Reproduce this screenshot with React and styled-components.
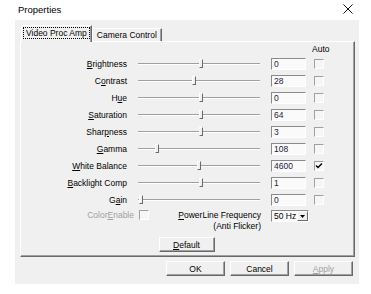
import styled, { createGlobalStyle } from 'styled-components';

const GlobalStyle = createGlobalStyle`
  html, body {
    margin: 0;
    padding: 0;
    background: #ffffff;
  }
  body {
    font-family: "Liberation Sans", Arial, sans-serif;
    font-size: 8.5px;
    color: #000;
  }
`;

const controls = [
  { label: 'Brightness', key: 0, value: '0', pos: 61 },
  { label: 'Contrast', key: 1, value: '28', pos: 54 },
  { label: 'Hue', key: 1, value: '0', pos: 61 },
  { label: 'Saturation', key: 0, value: '64', pos: 61 },
  { label: 'Sharpness', key: 4, value: '3', pos: 61 },
  { label: 'Gamma', key: 0, value: '108', pos: 17 },
  { label: 'White Balance', key: 0, value: '4600', pos: 59, auto: true },
  { label: 'Backlight Comp', key: 0, value: '1', pos: 61 },
  { label: 'Gain', key: 1, value: '0', pos: 1 },
];

function Accel({ text, at }) {
  return (
    <>
      {text.slice(0, at)}
      <u>{text[at]}</u>
      {text.slice(at + 1)}
    </>
  );
}

function App() {
  return (
    <Window>
      <GlobalStyle />
      <TitleBar>
        <Title>Properties</Title>
        <Close viewBox="0 0 10 10">
          <path d="M0.5 0.5 L9.5 9.5 M9.5 0.5 L0.5 9.5" stroke="#111" strokeWidth="1" />
        </Close>
      </TitleBar>

      <Body>
        <TabBar>
          <Tab $active>
            <Focus>Video Proc Amp</Focus>
          </Tab>
          <Tab>Camera Control</Tab>
        </TabBar>

        <Panel>
          <HeaderRow>
            <AutoLabel>Auto</AutoLabel>
          </HeaderRow>

          {controls.map((c) => (
            <Row key={c.label}>
              <Label>
                <Accel text={c.label} at={c.key} />
              </Label>
              <Track>
                <Thumb style={{ left: c.pos }} />
              </Track>
              <ValueBox>{c.value}</ValueBox>
              <Check $checked={c.auto}>
                {c.auto && (
                  <svg width="8" height="8" viewBox="0 0 8 8">
                    <path d="M1 3.5 L3 5.5 L7 1.5" stroke="#000" strokeWidth="1.4" fill="none" />
                  </svg>
                )}
              </Check>
            </Row>
          ))}

          <ExtraRow>
            <ColorLabel>
              Color<u>E</u>nable
            </ColorLabel>
            <Check $disabled />
            <PowerLabel>
              <span>
                <u>P</u>owerLine Frequency
              </span>
              <span>(Anti Flicker)</span>
            </PowerLabel>
            <Select>
              <SelectText>50 Hz</SelectText>
              <SelectArrow>
                <svg width="5" height="3" viewBox="0 0 5 3">
                  <path d="M0 0 H5 L2.5 3 Z" fill="#000" />
                </svg>
              </SelectArrow>
            </Select>
          </ExtraRow>

          <DefaultRow>
            <Button $w={56}>
              <u>D</u>efault
            </Button>
          </DefaultRow>
        </Panel>

        <ButtonRow>
          <Button>OK</Button>
          <Button>Cancel</Button>
          <Button $disabled>
            <u>A</u>pply
          </Button>
        </ButtonRow>
      </Body>
    </Window>
  );
}

export default App;

const Window = styled.div`
  width: 371px;
  height: 294px;
  background: #ffffff;
  overflow: hidden;
`;

const TitleBar = styled.div`
  height: 20px;
  display: flex;
  align-items: center;
  justify-content: space-between;
  padding: 0 18px 0 18px;
  box-sizing: border-box;
`;

const Title = styled.span`
  font-size: 9.5px;
  color: #000;
  margin-top: -1px;
`;

const Close = styled.svg`
  width: 10px;
  height: 10px;
  margin-top: -3px;
`;

const Body = styled.div`
  margin-left: 15px;
  width: 344px;
  height: 264px;
  box-sizing: border-box;
  background: #f0f0f0;
  padding: 5px 4px 0 5px;
  display: flex;
  flex-direction: column;
`;

const TabBar = styled.div`
  display: flex;
  align-items: flex-end;
  height: 16px;
  padding-left: 1px;
  position: relative;
  z-index: 1;
`;

const Tab = styled.div`
  box-sizing: border-box;
  height: ${(p) => (p.$active ? '17px' : '13px')};
  margin-bottom: ${(p) => (p.$active ? '-1px' : '0')};
  padding: ${(p) => (p.$active ? '1px 1px 0 1px' : '0 4px')};
  display: flex;
  align-items: ${(p) => (p.$active ? 'flex-start' : 'center')};
  background: #f0f0f0;
  border-top: 1px solid #ffffff;
  border-left: 1px solid #ffffff;
  border-right: 1px solid #696969;
  box-shadow: inset -1px 0 #a0a0a0;
  white-space: nowrap;
`;

const Focus = styled.span`
  display: block;
  padding: 0 2px;
  height: 12px;
  line-height: 11px;
  border: 1px dotted #000;
  box-sizing: border-box;
`;

const Panel = styled.div`
  width: 335px;
  height: 216px;
  box-sizing: border-box;
  border-top: 1px solid #ffffff;
  border-left: 1px solid #ffffff;
  border-right: 1px solid #696969;
  border-bottom: 1px solid #696969;
  box-shadow: inset -1px -1px #a0a0a0;
  display: flex;
  flex-direction: column;
`;

const HeaderRow = styled.div`
  height: 13px;
  display: flex;
  align-items: center;
  padding-left: 291px;
`;

const AutoLabel = styled.span``;

const Row = styled.div`
  height: 17px;
  display: flex;
  align-items: center;
`;

const Label = styled.div`
  width: 106px;
  text-align: right;
  white-space: nowrap;
`;

const Track = styled.div`
  position: relative;
  width: 122px;
  height: 2px;
  margin-left: 11px;
  border-top: 1px solid #a0a0a0;
  border-bottom: 1px solid #ffffff;
  background: #b8b8b8;
  box-sizing: border-box;
`;

const Thumb = styled.div`
  position: absolute;
  top: -5px;
  width: 4px;
  height: 9px;
  box-sizing: border-box;
  background: #f0f0f0;
  border-top: 1px solid #ffffff;
  border-left: 1px solid #ffffff;
  border-right: 1px solid #696969;
  border-bottom: 1px solid #696969;
`;

const ValueBox = styled.div`
  width: 35px;
  height: 12px;
  margin-left: 11px;
  box-sizing: border-box;
  background: #fafafa;
  border-top: 1px solid #8a8a8a;
  border-left: 1px solid #8a8a8a;
  border-right: 1px solid #ffffff;
  border-bottom: 1px solid #ffffff;
  padding-left: 2px;
  line-height: 10px;
  color: #1a1a3a;
`;

const Check = styled.div`
  width: 10px;
  height: 10px;
  margin-left: ${(p) => (p.$disabled ? '5px' : '8px')};
  box-sizing: border-box;
  background: #f6f6f6;
  border-top: 1px solid #a0a0a0;
  border-left: 1px solid #a0a0a0;
  border-right: 1px solid #ffffff;
  border-bottom: 1px solid #ffffff;
  display: flex;
  align-items: center;
  justify-content: center;
`;

const ExtraRow = styled.div`
  display: flex;
  align-items: flex-start;
  margin-top: 2px;
  height: 22px;
`;

const ColorLabel = styled.div`
  width: 113px;
  text-align: right;
  color: #a0a0a0;
  line-height: 11px;
`;

const PowerLabel = styled.div`
  width: 112px;
  display: flex;
  flex-direction: column;
  align-items: flex-end;
  line-height: 11px;
  white-space: nowrap;
`;

const Select = styled.div`
  width: 38px;
  height: 12px;
  margin-left: 10px;
  box-sizing: border-box;
  display: flex;
  background: #fafafa;
  border-top: 1px solid #8a8a8a;
  border-left: 1px solid #8a8a8a;
  border-right: 1px solid #ffffff;
  border-bottom: 1px solid #ffffff;
`;

const SelectText = styled.span`
  flex: 1;
  min-width: 0;
  padding-left: 2px;
  line-height: 10px;
  white-space: nowrap;
  overflow: hidden;
`;

const SelectArrow = styled.div`
  width: 11px;
  flex: none;
  box-sizing: border-box;
  background: #f0f0f0;
  border-top: 1px solid #ffffff;
  border-left: 1px solid #ffffff;
  border-right: 1px solid #696969;
  border-bottom: 1px solid #696969;
  display: flex;
  align-items: center;
  justify-content: center;
`;

const DefaultRow = styled.div`
  display: flex;
  justify-content: center;
  margin-top: 5px;
  padding-right: 2px;
`;

const Button = styled.div`
  width: ${(p) => p.$w || 59}px;
  height: 15px;
  box-sizing: border-box;
  display: flex;
  align-items: center;
  justify-content: center;
  background: #f0f0f0;
  border-top: 1px solid #ffffff;
  border-left: 1px solid #ffffff;
  border-right: 1px solid #696969;
  border-bottom: 1px solid #696969;
  box-shadow: inset -1px -1px #a0a0a0;
  color: ${(p) => (p.$disabled ? '#a0a0a0' : '#000')};
`;

const ButtonRow = styled.div`
  display: flex;
  justify-content: flex-end;
  gap: 5px;
  margin-top: 4px;
  padding-right: 2px;
`;
